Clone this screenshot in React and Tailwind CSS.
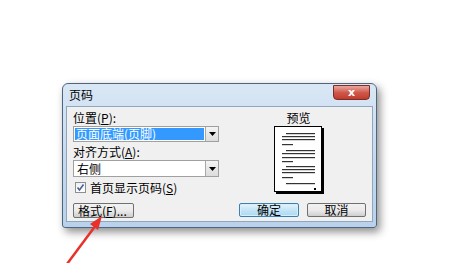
import React from "react";

function PagePreview() {
  const full = (y, x1 = 8) => <rect key={y + "-" + x1} x={x1} y={y} width={40 - x1 + 1} height="1.2" fill="#333" />;
  const short = (y) => <rect key={"s" + y} x="8" y={y} width="11" height="1.2" fill="#333" />;
  return (
    <svg width="50" height="68" viewBox="0 0 50 68">
      <rect x="2" y="2" width="48" height="66" fill="#000" />
      <rect x="0.5" y="0.5" width="47" height="65" fill="#fff" stroke="#000" />
      {full(7, 12)}
      {full(10)}
      {full(13)}
      {short(18)}
      {full(24, 12)}
      {full(27)}
      {full(31)}
      {short(35)}
      {full(40, 12)}
      {full(43)}
      {full(46)}
      {short(51)}
      {full(57, 12)}
      <rect x="40" y="62" width="2" height="2" fill="#000" />
    </svg>
  );
}

function Arrow() {
  return (
    <svg className="absolute left-0 top-0" width="450" height="263" viewBox="0 0 450 263">
      <line x1="67" y1="264" x2="96" y2="225" stroke="#e8312b" strokeWidth="2.5" />
      <polygon points="102,216 90,224 98,230" fill="#e8312b" />
    </svg>
  );
}

function DropArrowBtn() {
  return (
    <div className="w-[13px] h-full flex items-center justify-center bg-gradient-to-b from-[#f4f4f4] to-[#dcdcdc] border-l border-[#a8a8a8]">
      <svg width="7" height="4" viewBox="0 0 7 4">
        <polygon points="0,0 7,0 3.5,4" fill="#000" />
      </svg>
    </div>
  );
}

export default function App() {
  return (
    <div
      className="relative w-[450px] h-[263px] bg-white overflow-hidden pl-[62px] pt-[83px] text-black"
      style={{ fontFamily: '"Noto Sans CJK SC", "Noto Sans", sans-serif' }}
    >
      <div className="relative w-[315px] h-[145px] rounded-t-[6px] rounded-b-[3px] border border-[#4e6580] bg-gradient-to-b from-[#d9e7f5] via-[#c6daef] to-[#b9d1ea] shadow-[3px_4px_8px_rgba(0,0,0,0.45)] flex flex-col">
        <div className="h-[22px] flex items-center pl-[6px] text-[12px] leading-none text-black">页码</div>
        <div className="absolute right-[6px] top-[1px] w-[37px] h-[15px] rounded-b-[4px] border border-[#7a2d2a] bg-gradient-to-b from-[#e9a89e] via-[#cf5a4c] to-[#c23a2b] flex items-center justify-center">
          <span className="text-white text-[11px] font-bold leading-none" style={{ fontFamily: '"DejaVu Sans", sans-serif' }}>x</span>
        </div>
        <div className="mx-[3px] h-[116px] border border-[#8fa6bf] bg-[#f0f0f0] flex text-[12px] leading-[14px]">
          <div className="w-[160px] pl-[6px] pt-[4px] flex flex-col">
            <div className="h-[14px]">位置(<u>P</u>):</div>
            <div className="mt-[1px] w-[146px] h-[16px] border border-[#a0a0a0] bg-white flex">
              <div className="flex-1 m-[1px] bg-[#3399ff] text-white text-[12px] leading-[12px] pl-[1px] flex items-center">页面底端(页脚)</div>
              <DropArrowBtn />
            </div>
            <div className="mt-[3px] h-[14px]">对齐方式(<u>A</u>):</div>
            <div className="mt-[1px] w-[146px] h-[17px] border border-[#a0a0a0] bg-white flex">
              <div className="flex-1 pl-[3px] flex items-center">右侧</div>
              <DropArrowBtn />
            </div>
            <div className="mt-[4px] h-[13px] flex items-center gap-[4px] pl-[2px]">
              <div className="w-[11px] h-[11px] border border-[#8e8f8f] bg-gradient-to-b from-[#f0f0f0] to-[#ffffff] flex items-center justify-center">
                <svg width="9" height="9" viewBox="0 0 9 9">
                  <polyline points="1.5,4.5 3.5,7 7.5,1.5" fill="none" stroke="#4a5f97" strokeWidth="1.6" />
                </svg>
              </div>
              <span>首页显示页码(<u>S</u>)</span>
            </div>
            <div className="mt-[9px] w-[61px] h-[15px] rounded-[2px] border border-[#707070] bg-gradient-to-b from-[#f2f2f2] via-[#ebebeb] to-[#cfcfcf] flex items-center pl-[4px] text-[12px] leading-none">
              格式(<u>F</u>)...
            </div>
          </div>
          <div className="flex-1 flex flex-col items-center pt-[4px]">
            <div className="h-[14px] mr-[2px] text-[12px]">预览</div>
            <div className="ml-[-1px] mt-[1px]">
              <PagePreview />
            </div>
            <div className="mt-[9px] flex gap-[8px] ml-[6px]">
              <div className="w-[60px] h-[14px] rounded-[2px] border border-[#3c7fb1] bg-gradient-to-b from-[#e5f4fc] via-[#c4e5f6] to-[#a7d9f5] shadow-[inset_0_0_0_1px_#d8eefb] flex items-center justify-center text-[12px] leading-none">确定</div>
              <div className="w-[59px] h-[14px] rounded-[2px] border border-[#707070] bg-gradient-to-b from-[#f2f2f2] via-[#ebebeb] to-[#cfcfcf] flex items-center justify-center text-[12px] leading-none">取消</div>
            </div>
          </div>
        </div>
      </div>
      <Arrow />
    </div>
  );
}
